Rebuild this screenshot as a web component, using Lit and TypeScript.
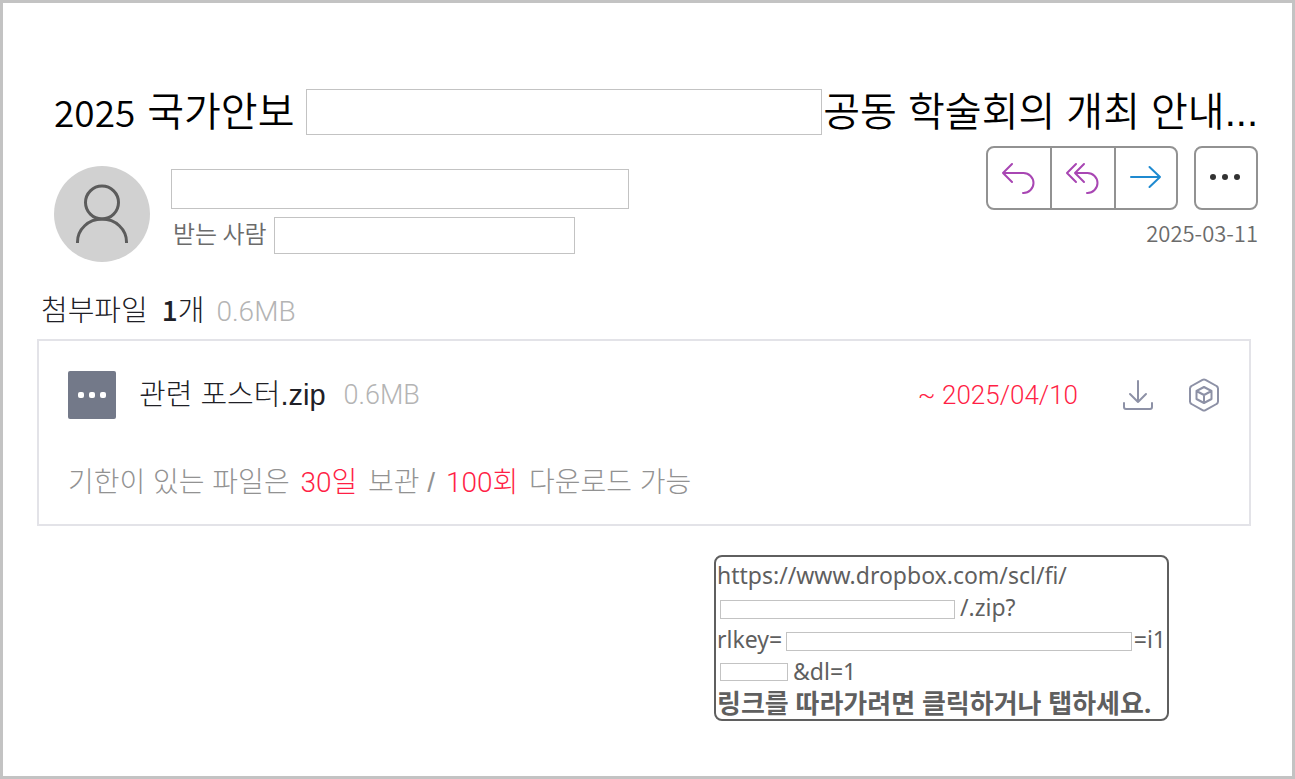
import { LitElement, html, css, svg } from "lit";
import { customElement, property } from "lit/decorators.js";

const person = svg`<circle cx="48" cy="36.5" r="16.5"/><path d="M23.5 77V76a24.5 23 0 0 1 49 0v1"/>`;

@customElement("redacted-box")
class RedactedBox extends LitElement {
  static styles = css`
    :host {
      display: block;
      box-sizing: border-box;
      border: 1px solid #c3c3c3;
      background: #fff;
    }
  `;
  render() {
    return html``;
  }
}

@customElement("mail-header")
class MailHeader extends LitElement {
  @property() date = "";

  static styles = css`
    :host { display: block; }
    h1 {
      display: flex;
      align-items: flex-start;
      margin: 0;
      font-family: "Liberation Sans", "Noto Sans CJK KR", sans-serif;
      font-size: 40px;
      line-height: 46px;
      font-weight: 350;
      color: #000;
      white-space: nowrap;
    }
    .year { font-family: "Noto Sans CJK KR", sans-serif; font-size: 37px; line-height: 44px; margin-right: 12px; }
    .title-gap { flex: 1; height: 46px; margin: 0 1px 0 12px; }
    .row { display: flex; align-items: flex-start; margin-top: 11px; }
    .avatar {
      flex: none;
      width: 96px;
      height: 96px;
      margin-top: 20px;
      border-radius: 50%;
      background: #d1d1d1;
    }
    .avatar svg { display: block; fill: none; stroke: #5c5c5c; stroke-width: 3; }
    .people { flex: 1; margin: 23px 0 0 21px; }
    .sender { width: 458px; height: 40px; }
    .to { display: flex; align-items: flex-start; margin-top: 8px; padding-left: 2px; font-size: 24px; line-height: 32px; color: #6b6b6b; font-weight: 350; }
    .recipient { width: 301px; height: 37px; margin-left: 7px; }
    .side { display: flex; flex-direction: column; align-items: flex-end; }
    .actions { display: flex; gap: 16px; }
    .group { display: flex; }
    button {
      box-sizing: border-box;
      display: grid;
      place-items: center;
      width: 64px;
      height: 64px;
      padding: 0;
      border: 2px solid #929292;
      border-radius: 8px;
      background: #fff;
    }
    .group button { width: 66px; border-radius: 0; }
    .group button + button { margin-left: -2px; }
    .group button:first-child { border-radius: 8px 0 0 8px; }
    .group button:last-child { width: 64px; border-radius: 0 8px 8px 0; }
    button svg { fill: none; stroke-width: 2; stroke-linecap: round; stroke-linejoin: round; }
    .purple { stroke: #a846b3; }
    .blue { stroke: #1f8ad0; }
    button .dots { fill: #333; stroke: none; }
    time { margin-top: 6px; font-size: 22px; line-height: 32px; font-weight: 350; color: #6b6b6b; }
  `;

  render() {
    return html`
      <h1>
        <span class="year">2025</span><span>국가안보</span>
        <redacted-box class="title-gap"></redacted-box>
        <span>공동 학술회의 개최 안내...</span>
      </h1>
      <div class="row">
        <div class="avatar"><svg width="96" height="96" aria-hidden="true">${person}</svg></div>
        <div class="people">
          <redacted-box class="sender"></redacted-box>
          <div class="to"><span>받는 사람</span><redacted-box class="recipient"></redacted-box></div>
        </div>
        <div class="side">
          <div class="actions">
            <div class="group">
              <button aria-label="회신">
                <svg class="purple" width="36" height="36" viewBox="1 0 36 36"><path d="M12 4 3 13l9 9M3 13h20.500a10 10 0 0 1 0 20H23"/></svg>
              </button>
              <button aria-label="전체 회신">
                <svg class="purple" width="36" height="36" viewBox="1 0 36 36"><path d="M12 4 3 13l9 9M20 4l-9 9 9 9M11 13h12.500a10 10 0 0 1 0 20H23"/></svg>
              </button>
              <button aria-label="전달">
                <svg class="blue" width="36" height="36"><path d="M3 17h29M21.500 7 32 17 21.500 27"/></svg>
              </button>
            </div>
            <button aria-label="더 보기">
              <svg class="dots" width="36" height="36" viewBox="1 0 36 36"><circle cx="6" cy="17" r="3"/><circle cx="18" cy="17" r="3"/><circle cx="30" cy="17" r="3"/></svg>
            </button>
          </div>
          <time datetime=${this.date}>${this.date}</time>
        </div>
      </div>
    `;
  }
}

@customElement("attachment-list")
class AttachmentList extends LitElement {
  @property() name = "";
  @property() size = "";
  @property() expires = "";

  static styles = css`
    :host { display: block; font-family: "Liberation Sans", "Noto Sans CJK KR", sans-serif; }
    h2 { display: flex; align-items: baseline; margin: 0 0 0 4px; font-size: 29px; line-height: 40px; font-weight: 300; color: #202026; }
    h2 b { margin-left: 14px; font-family: "Noto Sans CJK KR", sans-serif; font-size: 28px; font-weight: 500; }
    .size { color: #b4b4b4; font-family: Roboto, sans-serif; font-size: 28px; font-weight: 300; }
    h2 .size { margin-left: 12px; }
    .card { margin-top: 7px; padding: 30px 27px 18px 29px; border: 2px solid #e3e3e8; }
    .file { display: flex; align-items: center; line-height: 48px; }
    .type { flex: none; border-radius: 2px; background: #737989; fill: #fff; }
    .name { margin-left: 23px; font-size: 29px; line-height: 50px; font-weight: 300; color: #202026; }
    .file { height: 48px; }
    .file .size { margin-left: 18px; font-size: 27px; }
    .expires { margin-left: auto; color: #ff1f46; font-family: Roboto, sans-serif; font-size: 26px; font-weight: 300; }
    button { display: grid; padding: 0; border: 0; background: none; }
    button svg { fill: none; stroke: #8d91a6; stroke-width: 2; stroke-linecap: round; stroke-linejoin: round; }
    .download { margin-left: 42px; }
    .viewer { margin-left: 30px; }
    p { margin: 41px 0 0; font-size: 28px; line-height: 46px; font-weight: 300; color: #929292; }
    em { margin: 0 3px; font-family: Roboto, "Noto Sans CJK KR", sans-serif; font-style: normal; color: #ff1f46; }
  `;

  render() {
    return html`
      <h2><span>첨부파일</span><b>1</b><span>개</span><span class="size">${this.size}</span></h2>
      <div class="card">
        <div class="file">
          <svg class="type" width="48" height="48" aria-hidden="true">
            <rect x="10" y="21" width="6" height="6" rx="2"/><rect x="21" y="21" width="6" height="6" rx="2"/><rect x="32" y="21" width="6" height="6" rx="2"/>
          </svg>
          <span class="name">${this.name}</span>
          <span class="size">${this.size}</span>
          <span class="expires">~ ${this.expires}</span>
          <button class="download" aria-label="다운로드">
            <svg width="36" height="36"><path d="M18 4v21M10 17l8 8 8-8M4 26v4q0 2 2 2h24q2 0 2-2v-4"/></svg>
          </button>
          <button class="viewer" aria-label="미리보기">
            <svg width="36" height="36"><path d="m16.500 2.800-11 6.200q-1.500.8-1.500 2.500v13q0 1.700 1.500 2.500l11 6.200q1.500.8 3 0l11-6.200q1.500-.8 1.500-2.500v-13q0-1.700-1.500-2.500l-11-6.200q-1.500-.8-3 0zM18 10l7.500 4v8L18 26l-7.500-4v-8zM10.500 14l7.500 4 7.500-4M18 18v8"/></svg>
          </button>
        </div>
        <p>기한이 있는 파일은 <em>30일</em> 보관 / <em>100회</em> 다운로드 가능</p>
      </div>
    `;
  }
}

@customElement("link-hint")
class LinkHint extends LitElement {
  static styles = css`
    :host { display: block; box-sizing: border-box; width: 455px; padding: 2px 1px 0; border: 2px solid #5f5f5f; border-radius: 8px; color: #5f5f5f; font-family: "Noto Sans", "Noto Sans CJK KR", sans-serif; }
    a { display: block; color: inherit; text-decoration: none; }
    .line { display: flex; align-items: center; font-size: 23px; line-height: 32px; white-space: nowrap; }
    .path { width: 235px; height: 19px; margin: 4px 5px 0 3px; }
    .key { flex: 1; height: 19px; margin: 4px 2px 0 4px; }
    .tail { width: 68px; height: 18px; margin: 2px 5px 0 3px; }
    strong { display: block; font-size: 26px; line-height: 32px; font-weight: 700; white-space: nowrap; }
  `;

  render() {
    return html`
      <a href="#">
        <span class="line">https://www.dropbox.com/scl/fi/</span>
        <span class="line"><redacted-box class="path"></redacted-box>/.zip?</span>
        <span class="line">rlkey=<redacted-box class="key"></redacted-box>=i1</span>
        <span class="line"><redacted-box class="tail"></redacted-box>&amp;dl=1</span>
      </a>
      <strong>링크를 따라가려면 클릭하거나 탭하세요.</strong>
    `;
  }
}

@customElement("app-root")
class AppRoot extends LitElement {
  static styles = css`
    :host {
      display: block;
      box-sizing: border-box;
      min-height: 100vh;
      padding: 86px 34px 48px;
      border: 3px solid #c3c3c3;
      background: #fff;
      font-family: "Noto Sans CJK KR", sans-serif;
    }
    .header { margin: 0 0 0 17px; }
    .files { margin: 27px 7px 0 0; }
    .hint { margin: 29px 89px 0 auto; }
  `;

  render() {
    return html`
      <mail-header class="header" date="2025-03-11"></mail-header>
      <attachment-list class="files" name="관련 포스터.zip" size="0.6MB" expires="2025/04/10"></attachment-list>
      <link-hint class="hint"></link-hint>
    `;
  }
}
